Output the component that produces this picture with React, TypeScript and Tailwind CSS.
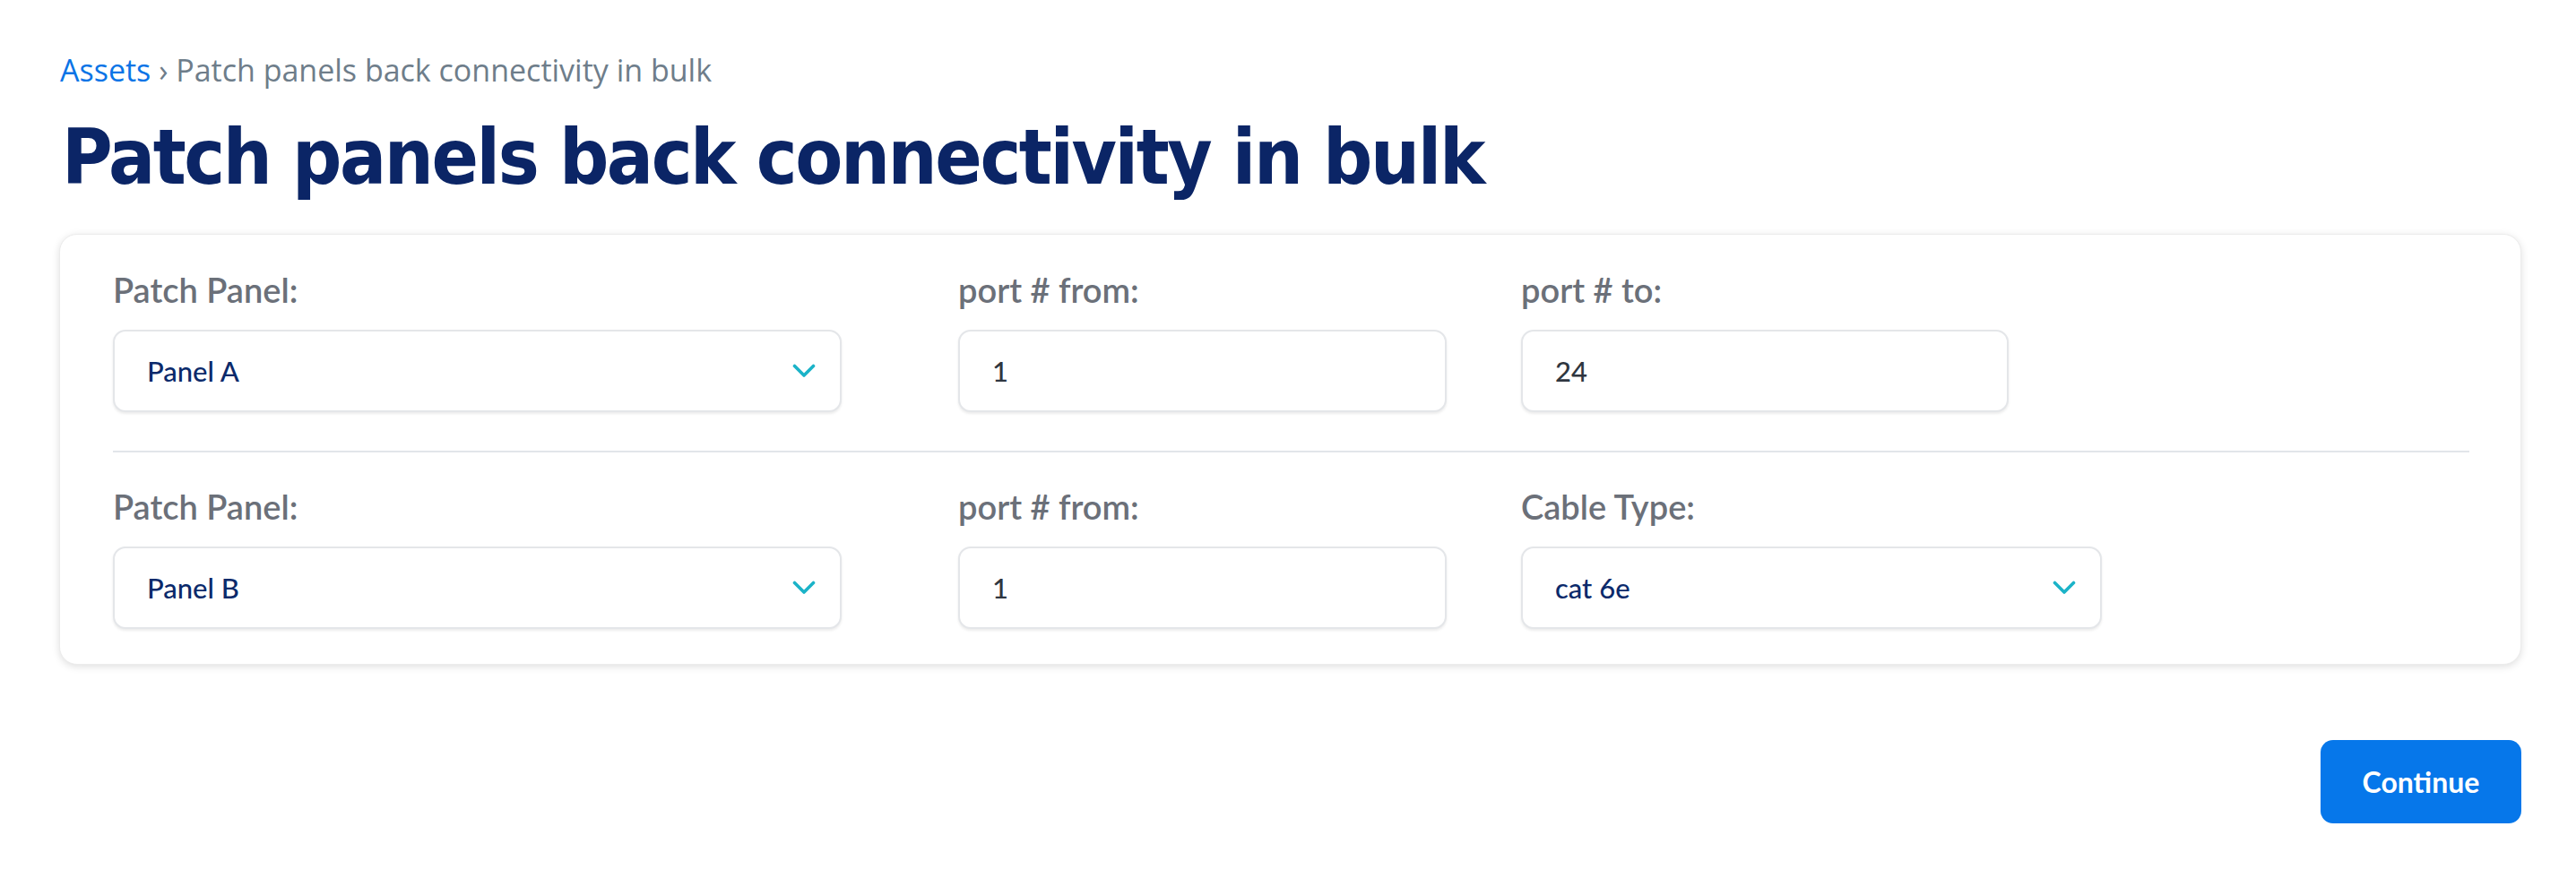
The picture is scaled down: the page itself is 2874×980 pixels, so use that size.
// App.tsx

type FieldProps = {
  label: string;
  value: string;
  select?: boolean;
  width: string;
};

const Chevron = () => (
  <svg width="26" height="16" viewBox="0 0 26 16" fill="none" className="shrink-0">
    <polyline
      points="2.5,2.5 13,13 23.5,2.5"
      stroke="#1bb3c8"
      strokeWidth="3.6"
      strokeLinecap="round"
      strokeLinejoin="round"
    />
  </svg>
);

const Field = ({ label, value, select = false, width }: FieldProps) => {
  return (
    <div className="flex flex-col">
      {/* ラベル */}
      <label className="text-[38px] leading-[48px] font-semibold text-[#6b7079]">
        {label}
      </label>

      {/* 入力欄 */}
      <div
        className={`${width} mt-[21px] h-[92px] flex items-center justify-between rounded-[14px] border-2 border-[#e4e6e9] bg-white shadow-[0_2px_3px_rgba(0,0,0,0.08)] pl-[36px] pr-[27px]`}
      >
        <span
          className={`text-[31px] font-medium ${
            select ? "text-[#0b2a6b]" : "text-[#2f3640]"
          }`}
        >
          {value}
        </span>
        {select && <Chevron />}
      </div>
    </div>
  );
};

export default function App() {
  return (
    <div className="min-h-screen bg-white pl-[66px] pr-[61px] pt-[58px] font-['Lato',sans-serif]">
      {/* パンくず */}
      <div className="pl-[1px] text-[34px] leading-[40px] text-[#6e7d8a] font-['Open_Sans',sans-serif]">
        <span className="text-[#0a74e6]">Assets</span> › Patch panels back
        connectivity in bulk
      </div>

      {/* タイトル */}
      <h1 className="mt-[30px] pl-[3px] text-[86px] leading-[94px] font-bold text-[#0b2566] tracking-[-2.4px] font-['Liberation_Sans_Narrow','DejaVu_Sans_Condensed','Roboto',sans-serif]">
        Patch panels back connectivity in bulk
      </h1>

      {/* カード */}
      <div className="mt-[39px] rounded-[20px] border border-[#ececec] bg-white shadow-[0_2px_8px_rgba(0,0,0,0.13)] pl-[59px] pr-[57px] pt-[37px] pb-[39px]">
        <div className="flex">
          <div className="w-[943px]">
            <Field label="Patch Panel:" value="Panel A" select width="w-[813px]" />
          </div>
          <div className="w-[628px]">
            <Field label="port # from:" value="1" width="w-[545px]" />
          </div>
          <div className="flex-1">
            <Field label="port # to:" value="24" width="w-[544px]" />
          </div>
        </div>

        <div className="mt-[43px] h-[2px] bg-[#e2e5ea]" />

        <div className="flex pt-[36px]">
          <div className="w-[943px]">
            <Field label="Patch Panel:" value="Panel B" select width="w-[813px]" />
          </div>
          <div className="w-[628px]">
            <Field label="port # from:" value="1" width="w-[545px]" />
          </div>
          <div className="flex-1">
            <Field label="Cable Type:" value="cat 6e" select width="w-[648px]" />
          </div>
        </div>
      </div>

      {/* 続行ボタン */}
      <div className="mt-[84px] flex justify-end">
        <button className="w-[224px] h-[93px] rounded-[14px] bg-[#0677ea] text-white text-[32px] font-bold">
          Continue
        </button>
      </div>
    </div>
  );
}
